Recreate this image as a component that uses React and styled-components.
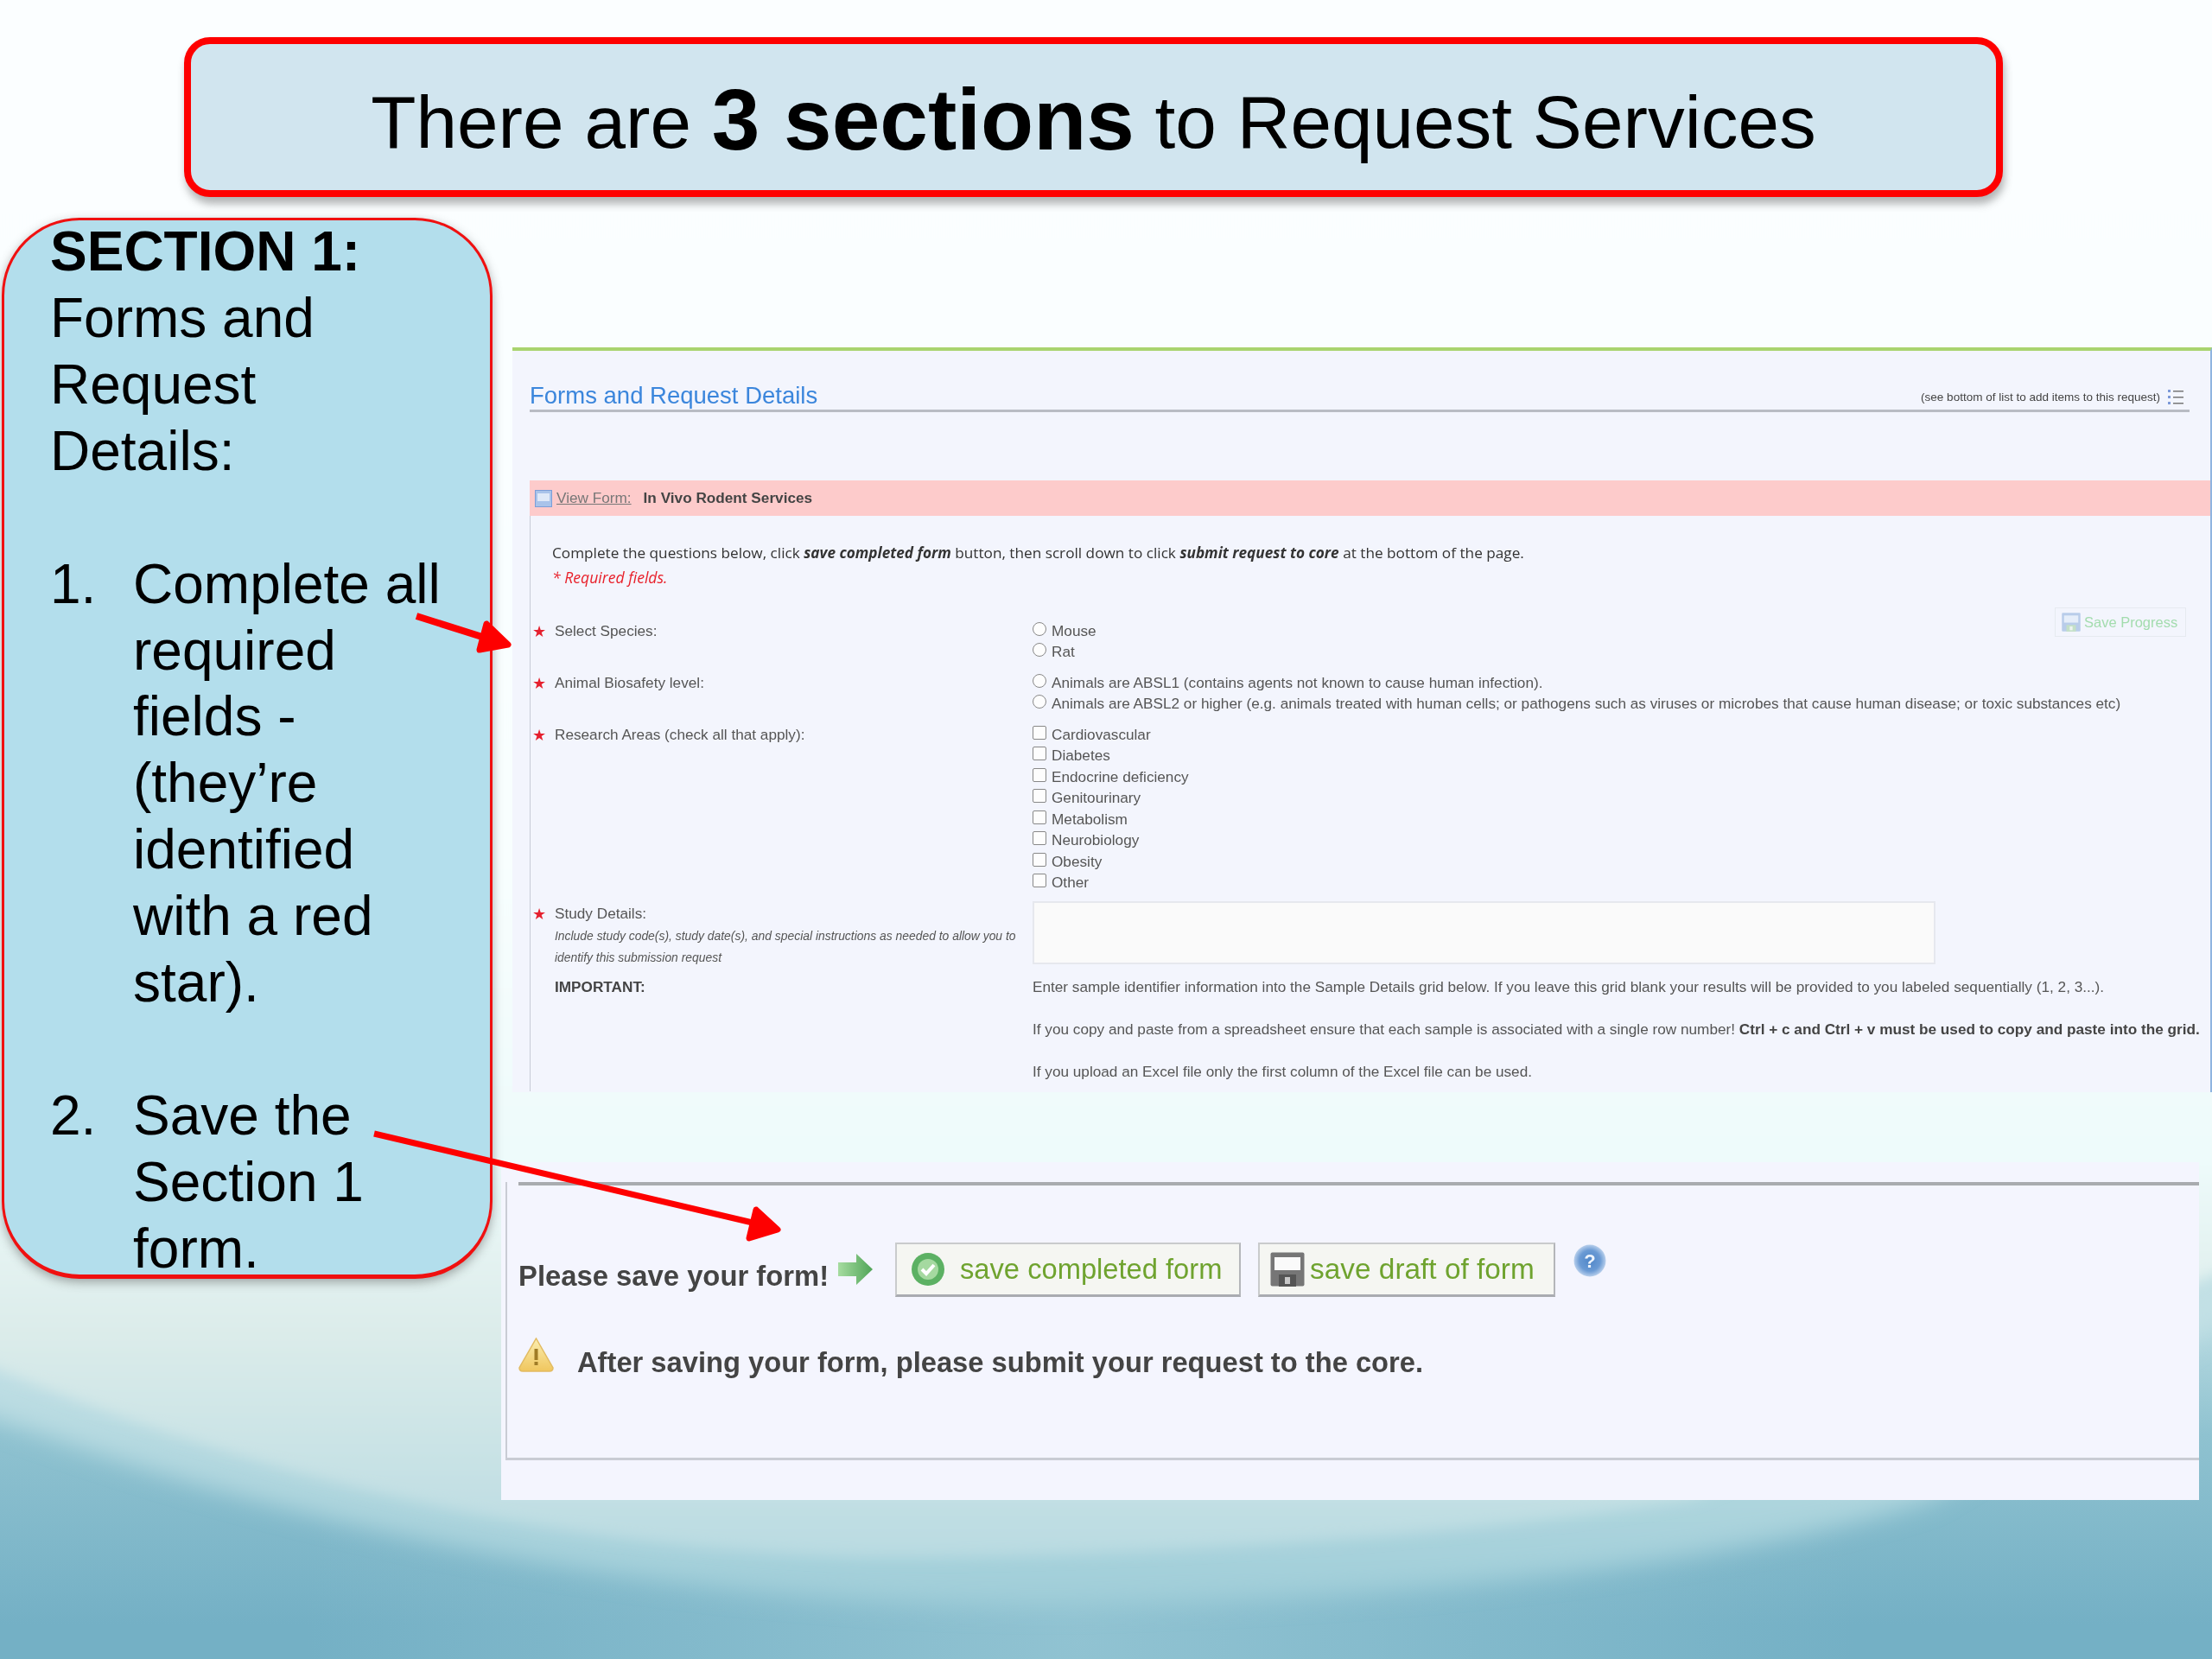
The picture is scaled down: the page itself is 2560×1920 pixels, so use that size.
import React from "react";
import styled, { createGlobalStyle } from "styled-components";

const GlobalStyle = createGlobalStyle`
  html, body {
    margin: 0;
    padding: 0;
    background: #fff;
  }
`;

const Slide = styled.div`
  position: relative;
  width: 2560px;
  height: 1920px;
  overflow: hidden;
  font-family: "Liberation Sans", Arial, sans-serif;
  padding-top: 43px;
  box-sizing: border-box;
  background: #fff;
`;

const Waves = styled.svg`
  position: absolute;
  left: 0;
  top: 0;
  width: 2560px;
  height: 1920px;
`;

const TitleBox = styled.div`
  position: relative;
  margin-left: 213px;
  width: 2105px;
  height: 185px;
  box-sizing: border-box;
  border: 8px solid #fe0000;
  border-radius: 30px;
  background: #d1e5ef;
  box-shadow: 2px 8px 10px rgba(70, 70, 70, 0.4);
  display: flex;
  align-items: center;
  justify-content: center;
  font-size: 85.5px;
  color: #000;
  white-space: pre;
  padding-top: 12px;
  b {
    font-size: 100px;
    line-height: 90px;
    position: relative;
    top: -4px;
  }
`;

const Body = styled.div`
  position: relative;
  display: flex;
  margin-top: 24px;
`;

const SidePanel = styled.div`
  margin-left: 2px;
  width: 568px;
  height: 1228px;
  box-sizing: border-box;
  flex: none;
  border: 3px solid #f01010;
  border-bottom-width: 5px;
  border-radius: 90px;
  background: #b3deec;
  box-shadow: 0 4px 12px rgba(70, 70, 70, 0.45);
  padding: 0 0 0 53px;
  font-size: 64px;
  line-height: 76.9px;
  color: #000;
`;

const SideHead = styled.div`
  font-weight: 700;
  margin-top: -2px;
`;

const SideSpacer = styled.div`
  height: 77px;
`;

const SideItem = styled.div`
  display: grid;
  grid-template-columns: 96px 1fr;
  margin-bottom: ${(p) => p.$gap || 0}px;
`;

const Forms = styled.div`
  flex: 1;
  min-width: 0;
  display: flex;
  flex-direction: column;
`;

const FormPanel = styled.div`
  margin-top: 150px;
  margin-left: 23px;
  height: 862px;
  box-sizing: border-box;
  background: #f3f5fd;
  border-top: 4px solid #a9d46f;
  border-right: 2px solid #8fb4e0;
  padding-left: 20px;
  color: #444;
  font-size: 17.2px;
  filter: blur(0.6px);
`;

const HeadRow = styled.div`
  margin-top: 36px;
  margin-right: 24px;
  height: 32px;
  border-bottom: 3px solid #b9bcc4;
  display: flex;
  align-items: flex-end;
  justify-content: space-between;
`;

const Heading = styled.div`
  font-size: 27.5px;
  line-height: 32px;
  color: #3b86dc;
`;

const HeadNote = styled.div`
  display: flex;
  align-items: center;
  gap: 8px;
  font-size: 13.5px;
  color: #444;
  padding-bottom: 5px;
  padding-right: 6px;
`;

const PinkBar = styled.div`
  margin-top: 79px;
  height: 41px;
  background: #fdcbcb;
  display: flex;
  align-items: center;
  padding-left: 6px;
  color: #555;
`;

const ViewLink = styled.span`
  margin-left: 5px;
  text-decoration: underline;
  color: #777;
`;

const BarTitle = styled.b`
  margin-left: 14px;
  color: #444;
`;

const FormBody = styled.div`
  border-left: 1px solid #c8ccd6;
  height: 666px;
  box-sizing: border-box;
  padding-top: 32px;
`;

const Instructions = styled.div`
  margin-left: 25px;
  font-family: "Open Sans", sans-serif;
  font-size: 17.2px;
  line-height: 22px;
  color: #333;
`;

const Required = styled.div`
  margin-left: 25px;
  margin-top: 6px;
  font-family: "Open Sans", sans-serif;
  font-style: italic;
  font-size: 17.6px;
  line-height: 22px;
  color: #e8202a;
`;

const Row = styled.div`
  position: relative;
  display: grid;
  grid-template-columns: 553px 1fr;
  padding-left: 28px;
  margin-top: ${(p) => p.$top}px;
`;

const Star = styled.span`
  position: absolute;
  left: 2px;
  top: 4px;
  color: #e5202e;
  font-size: 18px;
  line-height: 18px;
`;

const Label = styled.div`
  line-height: 24.5px;
  color: #555;
`;

const Hint = styled.div`
  font-size: 13.9px;
  font-style: italic;
  line-height: 25px;
  color: #555;
  margin-top: 1px;
  white-space: nowrap;
`;

const Important = styled.div`
  font-weight: 700;
  color: #444;
  line-height: 25px;
`;

const Options = styled.div`
  display: flex;
  flex-direction: column;
`;

const Option = styled.div`
  display: flex;
  align-items: center;
  gap: 6px;
  height: 24.5px;
  white-space: nowrap;
  color: #555;
`;

const Mark = styled.span`
  width: 16px;
  height: 16px;
  flex: none;
  box-sizing: border-box;
  margin-top: -5px;
  border: 1.5px solid #888;
  background: #fdfdfd;
  border-radius: ${(p) => (p.$round ? "50%" : "2px")};
`;

const SaveProgress = styled.div`
  position: absolute;
  right: 28px;
  top: -15px;
  width: 152px;
  height: 34px;
  box-sizing: border-box;
  border: 1px solid #e6eaf0;
  display: flex;
  align-items: center;
  gap: 4px;
  padding-left: 7px;
  font-size: 16.5px;
  color: #a3dcae;
`;

const DetailsBox = styled.div`
  width: 1045px;
  height: 73px;
  box-sizing: border-box;
  background: #fafafa;
  border: 2px solid #e6e8ee;
  margin-top: -2px;
`;

const Notes = styled.div`
  line-height: 24px;
  white-space: nowrap;
  color: #555;
  display: flex;
  flex-direction: column;
  gap: 25px;
  b {
    color: #444;
  }
`;

const SavePanel = styled.div`
  margin-top: 81px;
  margin-left: 10px;
  margin-right: 15px;
  height: 391px;
  box-sizing: border-box;
  background: #f4f5fe;
  padding-top: 23px;
  padding-left: 5px;
  filter: blur(0.6px);
`;

const SaveInner = styled.div`
  position: relative;
  height: 322px;
  box-sizing: border-box;
  border-left: 2px solid #c9ccd4;
  border-bottom: 3px solid #c9ccd4;
`;

const SaveRule = styled.div`
  margin-left: 13px;
  height: 4px;
  background: #a9abaf;
`;

const SaveRow = styled.div`
  display: flex;
  align-items: flex-start;
  margin-top: 66px;
  margin-left: 13px;
`;

const SavePrompt = styled.div`
  margin-top: 19px;
  width: 369px;
  font-size: 32.8px;
  line-height: 40px;
  font-weight: 700;
  color: #444;
  white-space: nowrap;
`;

const GoArrow = styled.svg`
  width: 42px;
  height: 38px;
  margin-top: 12px;
  flex: none;
`;

const SaveButton = styled.div`
  width: ${(p) => p.$w}px;
  height: 63px;
  margin-left: ${(p) => p.$ml}px;
  box-sizing: border-box;
  flex: none;
  border: 2px solid #c9cbcc;
  border-bottom: 3px solid #a9abb0;
  border-right-color: #b4b6ba;
  background: #f5f6f2;
  display: flex;
  align-items: center;
  gap: ${(p) => p.$gap}px;
  padding-left: ${(p) => p.$pl}px;
  font-size: ${(p) => p.$fs}px;
  color: #6fa32f;
  white-space: nowrap;
`;

const HelpIcon = styled.svg`
  width: 38px;
  height: 38px;
  margin-left: 21px;
  margin-top: 2px;
  flex: none;
`;

const WarnRow = styled.div`
  display: flex;
  align-items: flex-start;
  gap: 27px;
  margin-top: 47px;
  margin-left: 13px;
  font-size: 32.7px;
  line-height: 38px;
  font-weight: 700;
  color: #444;
`;

const WarnText = styled.span`
  margin-top: 10px;
`;

const ArrowLayer = styled.svg`
  position: absolute;
  left: 0;
  top: 0;
  width: 2560px;
  height: 1920px;
  pointer-events: none;
`;

const species = ["Mouse", "Rat"];
const biosafety = [
  "Animals are ABSL1 (contains agents not known to cause human infection).",
  "Animals are ABSL2 or higher (e.g. animals treated with human cells; or pathogens such as viruses or microbes that cause human disease; or toxic substances etc)",
];
const areas = [
  "Cardiovascular",
  "Diabetes",
  "Endocrine deficiency",
  "Genitourinary",
  "Metabolism",
  "Neurobiology",
  "Obesity",
  "Other",
];

const Disk = ({ size = 40, dark }) => (
  <svg width={size} height={size} viewBox="0 0 40 40">
    <rect x="0.5" y="0.5" width="39" height="39" rx="2" fill={dark ? "#767676" : "#b9cdea"} />
    <rect x="5" y="6" width="30" height="15" fill={dark ? "#fafafa" : "#e6eefa"} />
    <rect x="10" y="26" width="20" height="14" fill={dark ? "#555" : "#c4e0c8"} />
    <rect x="17" y="29" width="6" height="8" fill={dark ? "#c8c8c8" : "#eef5f0"} />
  </svg>
);

const App = () => {
  return (
    <Slide>
      <GlobalStyle />
      <Waves viewBox="0 0 2560 1920">
        <defs>
          <linearGradient id="sea" gradientUnits="userSpaceOnUse" x1="0" y1="1480" x2="0" y2="1880">
            <stop offset="0" stopColor="#c7e3e7" />
            <stop offset="0.45" stopColor="#8fc2d0" />
            <stop offset="1" stopColor="#74b0c5" />
          </linearGradient>
          <radialGradient id="glow" gradientUnits="userSpaceOnUse" cx="1250" cy="1900" r="900">
            <stop offset="0" stopColor="#a8d2dc" stopOpacity="0.55" />
            <stop offset="1" stopColor="#a8d2dc" stopOpacity="0" />
          </radialGradient>
          <linearGradient id="swell" gradientUnits="userSpaceOnUse" x1="0" y1="1560" x2="0" y2="1860">
            <stop offset="0" stopColor="#c2e0e5" />
            <stop offset="1" stopColor="#9fcdd8" />
          </linearGradient>
          <linearGradient id="crest" gradientUnits="userSpaceOnUse" x1="0" y1="0" x2="0" y2="1810">
            <stop offset="0" stopColor="#fbfeff" />
            <stop offset="0.55" stopColor="#f8fefe" />
            <stop offset="0.74" stopColor="#eefbfb" />
            <stop offset="0.85" stopColor="#dcecea" />
            <stop offset="1" stopColor="#b8dae1" />
          </linearGradient>
          <filter id="soft">
            <feGaussianBlur stdDeviation="14" />
          </filter>
          <filter id="softer">
            <feGaussianBlur stdDeviation="8" />
          </filter>
        </defs>
        <rect x="0" y="0" width="2560" height="1920" fill="url(#sea)" />
        <rect x="0" y="0" width="2560" height="1920" fill="url(#glow)" />
        <path
          d="M-60 1620 C 400 1800 900 1870 1306 1857 C 1700 1845 2050 1800 2236 1735 L 2620 1500 L 2620 1200 L -60 1200 Z"
          fill="url(#swell)"
          filter="url(#soft)"
        />
        <path
          d="M-60 1560 C 300 1720 700 1805 1060 1802 C 1400 1800 1750 1770 1960 1735 L 2620 1450 L 2620 -60 L -60 -60 Z"
          fill="url(#crest)"
          filter="url(#softer)"
        />
      </Waves>
      <TitleBox>
        There are <b>3 sections</b> to Request Services
      </TitleBox>
      <Body>
        <SidePanel>
          <SideHead>SECTION 1:</SideHead>
          <div>Forms and</div>
          <div>Request</div>
          <div>Details:</div>
          <SideSpacer />
          <SideItem $gap={77}>
            <span>1.</span>
            <span>
              Complete all
              <br />
              required
              <br />
              fields -
              <br />
              (they’re
              <br />
              identified
              <br />
              with a red
              <br />
              star).
            </span>
          </SideItem>
          <SideItem>
            <span>2.</span>
            <span>
              Save the
              <br />
              Section 1
              <br />
              form.
            </span>
          </SideItem>
        </SidePanel>
        <Forms>
          <FormPanel>
            <HeadRow>
              <Heading>Forms and Request Details</Heading>
              <HeadNote>
                (see bottom of list to add items to this request)
                <svg width="20" height="20" viewBox="0 0 20 20">
                  <rect x="1" y="2" width="3" height="3" fill="#7d9ad8" />
                  <rect x="1" y="9" width="3" height="3" fill="#7d9ad8" />
                  <rect x="1" y="16" width="3" height="3" fill="#7d9ad8" />
                  <rect x="7" y="3" width="12" height="1.5" fill="#777" />
                  <rect x="7" y="10" width="12" height="1.5" fill="#777" />
                  <rect x="7" y="17" width="12" height="1.5" fill="#777" />
                </svg>
              </HeadNote>
            </HeadRow>
            <PinkBar>
              <svg width="20" height="20" viewBox="0 0 20 20">
                <rect x="0.5" y="0.5" width="19" height="19" fill="#a9c3ea" stroke="#7c9ed8" />
                <rect x="3" y="4" width="14" height="9" fill="#dfe9f8" />
              </svg>
              <ViewLink>View Form:</ViewLink>
              <BarTitle>In Vivo Rodent Services</BarTitle>
            </PinkBar>
            <FormBody>
              <Instructions>
                Complete the questions below, click{" "}
                <b>
                  <i>save completed form</i>
                </b>{" "}
                button, then scroll down to click{" "}
                <b>
                  <i>submit request to core</i>
                </b>{" "}
                at the bottom of the page.
              </Instructions>
              <Required>* Required fields.</Required>
              <Row $top={39}>
                <Star>★</Star>
                <Label>Select Species:</Label>
                <Options>
                  {species.map((s) => (
                    <Option key={s}>
                      <Mark $round />
                      {s}
                    </Option>
                  ))}
                </Options>
                <SaveProgress>
                  <Disk size={22} />
                  Save Progress
                </SaveProgress>
              </Row>
              <Row $top={11}>
                <Star>★</Star>
                <Label>Animal Biosafety level:</Label>
                <Options>
                  {biosafety.map((s) => (
                    <Option key={s}>
                      <Mark $round />
                      {s}
                    </Option>
                  ))}
                </Options>
              </Row>
              <Row $top={11}>
                <Star>★</Star>
                <Label>Research Areas (check all that apply):</Label>
                <Options>
                  {areas.map((s) => (
                    <Option key={s}>
                      <Mark />
                      {s}
                    </Option>
                  ))}
                </Options>
              </Row>
              <Row $top={11}>
                <Star>★</Star>
                <div>
                  <Label>Study Details:</Label>
                  <Hint>
                    Include study code(s), study date(s), and special instructions as needed to allow you to
                    <br />
                    identify this submission request
                  </Hint>
                </div>
                <DetailsBox />
              </Row>
              <Row $top={9}>
                <Important>IMPORTANT:</Important>
                <Notes>
                  <span>
                    Enter sample identifier information into the Sample Details grid below. If you leave this grid
                    blank your results will be provided to you labeled sequentially (1, 2, 3...).
                  </span>
                  <span>
                    If you copy and paste from a spreadsheet ensure that each sample is associated with a single row
                    number! <b>Ctrl + c and Ctrl + v must be used to copy and paste into the grid.</b>
                  </span>
                  <span>If you upload an Excel file only the first column of the Excel file can be used.</span>
                </Notes>
              </Row>
            </FormBody>
          </FormPanel>
          <SavePanel>
            <SaveInner>
              <SaveRule />
              <SaveRow>
                <SavePrompt>Please save your form!</SavePrompt>
                <GoArrow viewBox="0 0 42 38">
                  <defs>
                    <linearGradient id="goFill" x1="0" y1="0" x2="1" y2="0">
                      <stop offset="0" stopColor="#a6dca0" />
                      <stop offset="1" stopColor="#4fa457" />
                    </linearGradient>
                  </defs>
                  <path d="M1 11 H22 V1 L41 19 L22 37 V27 H1 Z" fill="url(#goFill)" />
                </GoArrow>
                <SaveButton $w={400} $ml={25} $gap={17} $pl={16} $fs={32.7}>
                  <svg width="40" height="40" viewBox="0 0 40 40">
                    <circle cx="20" cy="20" r="19" fill="#5cb163" />
                    <circle cx="20" cy="20" r="12" fill="#a5d9a0" />
                    <path d="M13 20 L18 25 L27 15" fill="none" stroke="#fff" strokeWidth="4" />
                  </svg>
                  save completed form
                </SaveButton>
                <SaveButton $w={344} $ml={20} $gap={6} $pl={12} $fs={33.4}>
                  <Disk size={40} dark />
                  save draft of form
                </SaveButton>
                <HelpIcon viewBox="0 0 38 38">
                  <defs>
                    <radialGradient id="helpFill">
                      <stop offset="0" stopColor="#4f86c8" />
                      <stop offset="0.65" stopColor="#6a9ad4" />
                      <stop offset="1" stopColor="#b8cfec" />
                    </radialGradient>
                  </defs>
                  <circle cx="19" cy="19" r="18.5" fill="url(#helpFill)" />
                  <text x="19" y="27" textAnchor="middle" fontSize="22" fontWeight="700" fill="#eef4fc" fontFamily="Liberation Sans">
                    ?
                  </text>
                </HelpIcon>
              </SaveRow>
              <WarnRow>
                <svg width="41" height="40" viewBox="0 0 41 40">
                  <defs>
                    <linearGradient id="warnFill" x1="0" y1="0" x2="0" y2="1">
                      <stop offset="0" stopColor="#fbeeb0" />
                      <stop offset="1" stopColor="#f0c65e" />
                    </linearGradient>
                  </defs>
                  <path d="M20.5 1 L40 35 Q40 39 36 39 H5 Q1 39 1 35 Z" fill="url(#warnFill)" stroke="#e2bb62" strokeWidth="1.5" />
                  <rect x="18.5" y="13" width="4" height="13" fill="#a07c26" />
                  <rect x="18.5" y="28" width="4" height="4" fill="#a07c26" />
                </svg>
                <WarnText>After saving your form, please submit your request to the core.</WarnText>
              </WarnRow>
            </SaveInner>
          </SavePanel>
        </Forms>
      </Body>
      <ArrowLayer viewBox="0 0 2560 1920">
        <path d="M482 713 L580 744" stroke="#fe0000" strokeWidth="8" fill="none" />
        <path d="M563 722 L588 746 L555 752 Z" stroke="#fe0000" strokeWidth="7" strokeLinejoin="round" fill="#fe0000" />
        <path d="M433 1312 L892 1420" stroke="#fe0000" strokeWidth="7" fill="none" />
        <path d="M875 1400 L900 1423 L867 1433 Z" stroke="#fe0000" strokeWidth="7" strokeLinejoin="round" fill="#fe0000" />
      </ArrowLayer>
    </Slide>
  );
};

export default App;
